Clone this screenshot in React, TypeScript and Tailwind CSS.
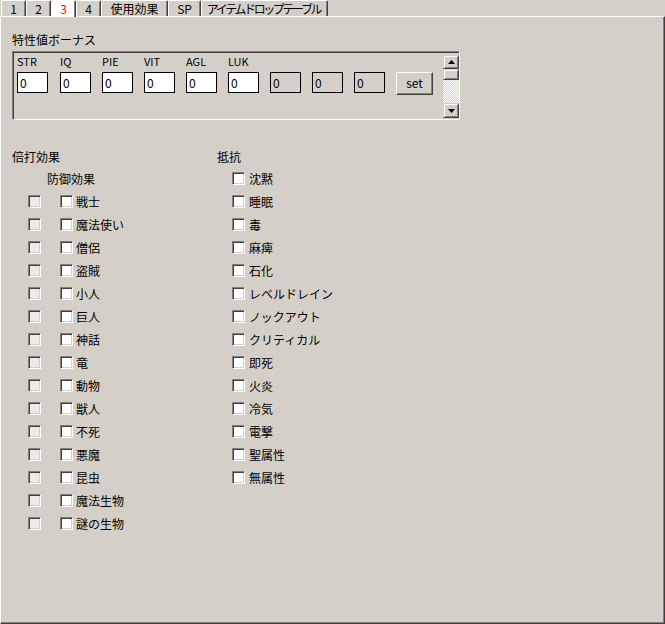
import React from "react";

const tabs = [
  { label: "1", w: "w-[25px]" },
  { label: "2", w: "w-[25px]" },
  { label: "3", w: "w-[25px]", sel: true },
  { label: "4", w: "w-[25px]" },
  { label: "使用効果", w: "w-[67px]" },
  { label: "SP", w: "w-[33px]" },
  { label: "アイテムドロップテーブル", w: "w-[127px]", tight: true },
];

const stats = ["STR", "IQ", "PIE", "VIT", "AGL", "LUK", "", "", ""];

const leftRows = [
  "戦士",
  "魔法使い",
  "僧侶",
  "盗賊",
  "小人",
  "巨人",
  "神話",
  "竜",
  "動物",
  "獣人",
  "不死",
  "悪魔",
  "昆虫",
  "魔法生物",
  "謎の生物",
];

const rightRows = [
  "睡眠",
  "毒",
  "麻痺",
  "石化",
  "レベルドレイン",
  "ノックアウト",
  "クリティカル",
  "即死",
  "火炎",
  "冷気",
  "電撃",
  "聖属性",
  "無属性",
];

function Check({ grey }: { grey?: boolean }) {
  return (
    <div
      className={
        "w-[13px] h-[13px] shrink-0 border border-t-[#808080] border-l-[#808080] border-b-white border-r-white shadow-[inset_1px_1px_#404040,inset_-1px_-1px_#d4d0c8] " +
        (grey ? "bg-[#ecebe8]" : "bg-white")
      }
    />
  );
}

function Arrow({ up }: { up?: boolean }) {
  return (
    <svg width="7" height="4" viewBox="0 0 7 4">
      {up ? (
        <polygon points="3.5,0 7,4 0,4" fill="#000" />
      ) : (
        <polygon points="0,0 7,0 3.5,4" fill="#000" />
      )}
    </svg>
  );
}

export default function App() {
  return (
    <div className="w-[665px] h-[624px] bg-[#d4d0c8] flex flex-col font-['Noto_Sans_CJK_JP',sans-serif] text-black overflow-hidden">
      {/* tab strip */}
      <div className="h-[16px] flex items-start pl-[1px] shrink-0">
        {tabs.map((t) =>
          t.sel ? (
            <div
              key={t.label}
              className={
                t.w +
                " h-[17px] relative z-10 bg-white border-l border-t border-white border-r border-r-[#404040] shadow-[inset_-1px_0_#808080] rounded-t-[2px] flex items-center justify-center text-[12px] leading-none text-[#ff0000] whitespace-nowrap"
              }
            >
              {t.label}
            </div>
          ) : (
            <div
              key={t.label}
              className={
                t.w +
                " h-[16px] border-l border-t border-white border-r border-r-[#404040] shadow-[inset_-1px_0_#808080] rounded-t-[2px] flex items-center justify-center text-[12px] leading-none whitespace-nowrap overflow-hidden " +
                (t.tight ? "tracking-[-2.4px] pr-[2px]" : "")
              }
            >
              {t.label}
            </div>
          )
        )}
      </div>

      {/* panel */}
      <div className="flex-1 flex flex-col border-t border-l border-white border-r border-b border-r-[#404040] border-b-[#404040] shadow-[inset_-1px_-1px_#808080] pl-[11px]">
        <div className="mt-[16px] h-[14px] leading-[14px] text-[12px]">特性値ボーナス</div>

        <div className="mt-[4px] w-[448px] h-[69px] flex border border-t-[#808080] border-l-[#808080] border-b-white border-r-white shadow-[inset_1px_1px_#404040]">
          <div className="flex pl-[4px] pt-[3px]">
            {stats.map((s, i) => (
              <div key={i} className={(i === 0 ? "w-[43px]" : "w-[42px]") + " flex flex-col"}>
                <div className="h-[12px] text-[11px] leading-[12px]">{s}</div>
                <div
                  className={
                    "mt-[5px] w-[31px] h-[21px] border border-black flex items-center pl-[2px] text-[12px] leading-none " +
                    (i < 6 ? "bg-white" : "bg-[#d4d0c8]")
                  }
                >
                  0
                </div>
              </div>
            ))}
            <div className="mt-[17px] w-[37px] h-[23px] border border-t-white border-l-white border-r-[#404040] border-b-[#404040] shadow-[inset_-1px_-1px_#808080] flex items-center justify-center text-[12px] leading-none pb-[1px]">
              set
            </div>
          </div>
          <div className="ml-auto mt-[3px] w-[16px] h-[63px] flex flex-col">
            <div className="h-[14px] border border-t-[#d4d0c8] border-l-[#d4d0c8] border-r-[#404040] border-b-[#404040] shadow-[inset_1px_1px_#ffffff,inset_-1px_-1px_#808080] flex items-center justify-center">
              <Arrow up />
            </div>
            <div className="h-[11px] border border-t-[#d4d0c8] border-l-[#d4d0c8] border-r-[#404040] border-b-[#404040] shadow-[inset_1px_1px_#ffffff,inset_-1px_-1px_#808080] bg-[#d4d0c8]" />
            <div className="flex-1 bg-[image:repeating-conic-gradient(#ffffff_0_25%,#d4d0c8_0_50%)] bg-[length:2px_2px]" />
            <div className="h-[15px] border border-t-[#d4d0c8] border-l-[#d4d0c8] border-r-[#404040] border-b-[#404040] shadow-[inset_1px_1px_#ffffff,inset_-1px_-1px_#808080] flex items-center justify-center">
              <Arrow />
            </div>
          </div>
        </div>

        {/* lower section */}
        <div className="mt-[26px] flex text-[12px] leading-none">
          <div className="w-[204px] flex flex-col">
            <div className="h-[22px] flex items-center">倍打効果</div>
            <div className="h-[22px] flex items-center pl-[35px]">防御効果</div>
            {leftRows.map((r) => (
              <div key={r} className="h-[23px] flex items-center pl-[16px]">
                <Check grey />
                <div className="ml-[19px]">
                  <Check />
                </div>
                <span className="ml-[3px]">{r}</span>
              </div>
            ))}
          </div>
          <div className="flex flex-col">
            <div className="h-[22px] flex items-center pl-[1px]">抵抗</div>
            <div className="h-[21px] flex items-center pl-[16px]">
              <Check />
              <span className="ml-[4px]">沈黙</span>
            </div>
            <div className="h-[1px]" />
            {rightRows.map((r) => (
              <div key={r} className="h-[23px] flex items-center pl-[16px]">
                <Check />
                <span className="ml-[4px]">{r}</span>
              </div>
            ))}
          </div>
        </div>
      </div>
    </div>
  );
}
